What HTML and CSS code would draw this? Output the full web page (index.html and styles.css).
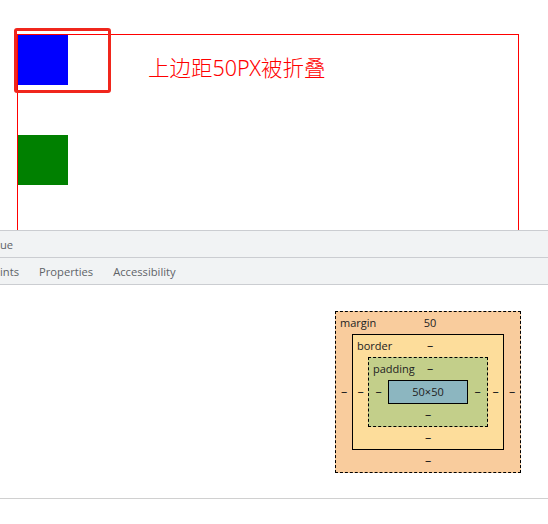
FILE: index.html
```html
<!DOCTYPE html>
<html lang="zh-CN">
<head>
<meta charset="utf-8">
<link rel="stylesheet" href="styles.css">
</head>
<body>
<div class="page">
  <div class="demo">
    <div class="parent">
      <div class="col">
        <div class="box blue"></div>
        <div class="box green"></div>
      </div>
      <div class="note">上边距50PX被折叠</div>
    </div>
    <div class="highlight"></div>
  </div>
  <div class="devtools">
    <div class="bar bar-top"><span class="tab">ue</span></div>
    <div class="bar bar-tabs">
      <span class="tab">ints</span>
      <span class="tab">Properties</span>
      <span class="tab">Accessibility</span>
    </div>
    <div class="pane">
      <div class="bm bm-margin">
        <div class="row-top"><span class="lbl">margin</span><span class="val">50</span><span></span></div>
        <div class="side dash">–</div>
        <div class="bm bm-border">
          <div class="row-top"><span class="lbl">border</span><span class="val dash">–</span><span></span></div>
          <div class="side dash">–</div>
          <div class="bm bm-padding">
            <div class="row-top"><span class="lbl">padding</span><span class="val dash">–</span><span></span></div>
            <div class="side dash">–</div>
            <div class="bm-content">50×50</div>
            <div class="side dash">–</div>
            <div class="row-bottom dash">–</div>
          </div>
          <div class="side dash">–</div>
          <div class="row-bottom dash">–</div>
        </div>
        <div class="side dash">–</div>
        <div class="row-bottom dash">–</div>
      </div>
    </div>
    <div class="divider"></div>
  </div>
</div>
</body>
</html>
```
FILE: styles.css
```css
* { box-sizing: border-box; }
html, body { margin: 0; padding: 0; background: #fff; }
body { width: 548px; height: 524px; overflow: hidden; }
.page { display: flex; flex-direction: column; height: 524px; }

.demo { position: relative; height: 230px; overflow: hidden; padding: 34px 0 0 17px; }
.parent {
  width: 502px; height: 260px;
  border: 1px solid #ff0000;
  display: flex; align-items: flex-start;
}
.col { display: flex; flex-direction: column; gap: 50px; }
.box { width: 50px; height: 50px; }
.blue { background: #0000ff; }
.green { background: #008000; }
.note {
  margin: 19px 0 0 80px;
  font-family: "Noto Sans", "Noto Sans CJK SC", sans-serif;
  font-size: 21.5px; line-height: 28px; color: #ff0000; font-weight: 300;
}
.highlight {
  position: absolute; left: 14px; top: 28px; width: 97px; height: 65px;
  border: 3px solid #f0261c; border-radius: 3px;
}

.devtools { flex: 1; display: flex; flex-direction: column; border-top: 1px solid #cbcdd1; }
.bar {
  height: 27px; background: #f1f3f4; border-bottom: 1px solid #cbcdd1;
  display: flex; align-items: center; gap: 20px;
  font-family: "Open Sans", "Noto Sans", sans-serif; font-size: 11.2px; color: #5f6368;
}
.tab { white-space: nowrap; }

.pane { display: flex; justify-content: flex-end; padding: 26px 27px 0 0; height: 213px; }

.bm {
  display: grid; grid-template-rows: 22px auto 22px;
  align-items: center; justify-items: center;
  font-family: "Open Sans", "Noto Sans", sans-serif; font-size: 11px; color: #222;
  line-height: 14px;
}
.bm-margin { grid-template-columns: 16px auto 16px; border: 1px dashed #000; background: #f9cc9d; align-self: flex-start; }
.bm-border { grid-template-columns: 15px auto 15px; border: 1px solid #000; background: #fddd9b; }
.bm-padding { grid-template-columns: 19px auto 19px; border: 1px dashed #000; background: #c3cf8a; }
.bm-content {
  width: 80px; height: 24px; border: 1px solid #000; background: #8cb6c0;
  display: flex; align-items: center; justify-content: center;
}
.row-top {
  grid-column: 1 / -1; width: 100%;
  display: grid; grid-template-columns: 1fr auto 1fr; align-items: center;
  padding-left: 4px;
}
.row-top .lbl { justify-self: start; }
.row-bottom { grid-column: 1 / -1; }
.side { text-align: center; }
.dash { font-size: 12.5px; }

.divider { height: 1px; background: #d0d0d0; }
```
